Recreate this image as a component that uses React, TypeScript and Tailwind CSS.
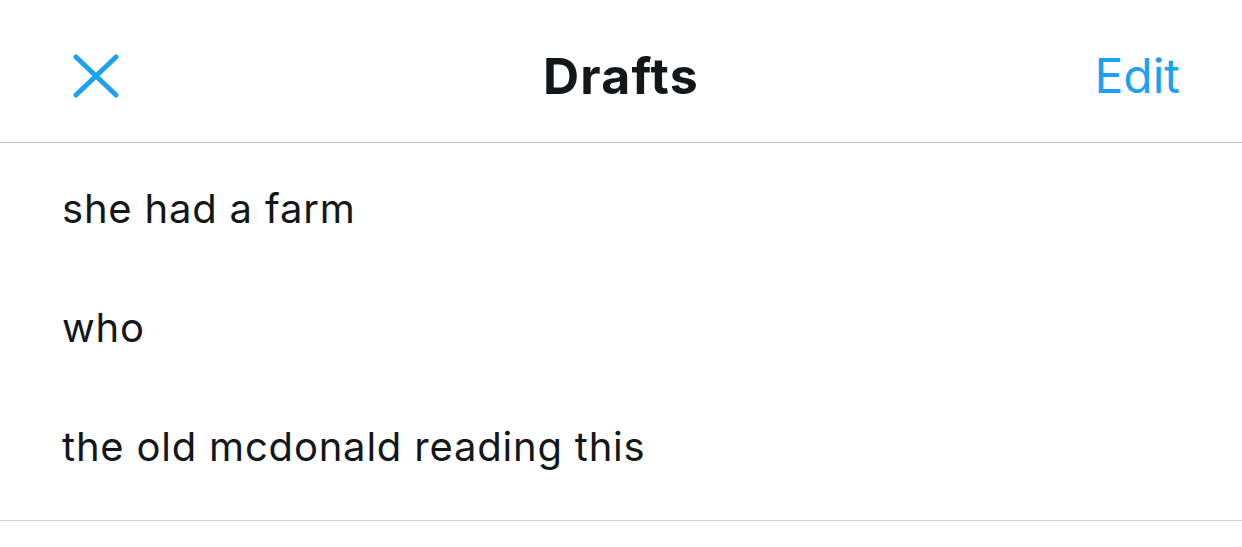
import React from 'react'

const drafts = ['she had a farm', 'who', 'the old mcdonald reading this']

function CloseIcon() {
  return (
    <svg width="46" height="44" viewBox="0 0 46 44" fill="none" stroke="#1da1f2" strokeWidth="5" strokeLinecap="round">
      <path d="M3 3L43 41M43 3L3 41" />
    </svg>
  )
}

export default function App() {
  return (
    <div className="h-[547px] w-[1242px] bg-white font-['Inter','Noto_Sans',sans-serif] text-[#14171a]">
      {/* Header */}
      <div className="grid h-[143px] grid-cols-[1fr_auto_1fr] items-center border-b border-[#cacaca] px-[62px] pt-[9px]">
        <button className="ml-[11px] flex h-[44px] w-[46px] items-center justify-center justify-self-start">
          <CloseIcon />
        </button>
        <h1 className="text-[50px] font-bold leading-none tracking-[1.2px]">Drafts</h1>
        <button className="justify-self-end text-[48px] leading-none text-[#1da1f2]">Edit</button>
      </div>

      {/* Draft list */}
      <ul className="border-b border-[#d4d4d4] pb-[14px] pt-[6px]">
        {drafts.map((text) => (
          <li key={text} className="flex h-[119px] items-center px-[62px] text-[40px] leading-[119px] tracking-[0.8px]">
            {text}
          </li>
        ))}
      </ul>
    </div>
  )
}
